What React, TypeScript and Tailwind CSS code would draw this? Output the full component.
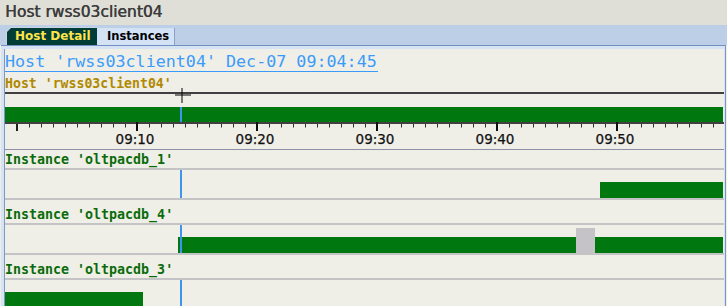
const SANS = "font-['DejaVu_Sans',sans-serif]";
const MONO = "font-['DejaVu_Sans_Mono',monospace]";

// timeline scale: 09:00 sits at page x 17, 12px per minute; content starts at page x 5
const toX = (sec: number) => 17 + (sec / 60) * 12 - 5;
const CURSOR = 820; // 09:13:40

type Span = { from: number; to: number; kind?: "busy" | "gap" };

const instances: { name: string; spans: Span[] }[] = [
  { name: "oltpacdb_1", spans: [{ from: 2915, to: 3530 }] },
  {
    name: "oltpacdb_4",
    spans: [
      { from: 805, to: 3530 },
      { from: 2795, to: 2890, kind: "gap" },
    ],
  },
  { name: "oltpacdb_3", spans: [{ from: -60, to: 630 }] },
];

function Bar({ span }: { span: Span }) {
  const left = toX(span.from);
  const width = toX(span.to) - left;
  if (span.kind === "gap") {
    return (
      <div
        className="absolute top-[3px] bottom-0 bg-[#c5c3c8]"
        style={{ left, width }}
      />
    );
  }
  return (
    <div
      className="absolute bottom-0 h-[16px] bg-[#00780f]"
      style={{ left, width }}
    />
  );
}

function CursorLine() {
  return (
    <div
      className="absolute top-0 bottom-0 w-[2px] bg-[#3d95f0]"
      style={{ left: toX(CURSOR) - 1 }}
    />
  );
}

function Ruler() {
  const minor = Array.from({ length: 59 }, (_, i) => 17 + i * 12);
  const labels = ["09:10", "09:20", "09:30", "09:40", "09:50"];
  return (
    <svg
      width={719}
      height={25}
      viewBox="5 0 719 25"
      className="block overflow-visible"
    >
      {minor.map((x) => (
        <rect key={x} x={x} y={0} width={1} height={3.5} fill="#303030" />
      ))}
      <rect x={16} y={0} width={2} height={7} fill="#202020" />
      {labels.map((t, i) => {
        const x = 137 + i * 120;
        return (
          <g key={t}>
            <rect x={x - 1} y={-3} width={2} height={10} fill="#101010" />
            <text
              x={x - 2}
              y={20}
              textAnchor="middle"
              fontFamily="DejaVu Sans, sans-serif"
              fontSize={13.5}
              fill="#111"
              stroke="#111"
              strokeWidth={0.25}
            >
              {t}
            </text>
          </g>
        );
      })}
    </svg>
  );
}

export default function App() {
  return (
    <div className="relative w-[727px] h-[306px] overflow-hidden bg-[#efefe7]">
      <div
        className={`h-[25px] bg-[#dfdfd7] pl-[5px] text-[15.5px] leading-[25px] text-[#3c3c3c] [text-shadow:0.5px_0_0_#3c3c3c] ${SANS}`}
      >
        Host rwss03client04
      </div>

      <div className={`h-[20px] bg-[#bccfe7] flex items-end pl-[6px] ${SANS}`}>
        <div className="h-[18px] w-[91px] bg-[#c9d5e5] pt-[1px] pl-[1px] [clip-path:polygon(5px_0,100%_0,100%_100%,0_100%,0_5px)]">
          <div className="h-full bg-[#003d36] pl-[8px] text-[12px] font-bold leading-[17px] text-[#ffe54a] [clip-path:polygon(4px_0,100%_0,100%_100%,0_100%,0_4px)]">
            Host Detail
          </div>
        </div>
        <div className="h-[17px] w-[78px] bg-[#d4e2f6] border-r border-[#8aa3cc] pl-[10px] text-[11.5px] font-bold leading-[17px] text-black">
          Instances
        </div>
      </div>

      <div className="border-t border-[#7391c0] bg-[#d6e3f5] pt-[3px] ml-[1px] mr-[1px] pl-[3px] pr-[1px] border-r border-r-[#7a93bf]">
        <div className="relative bg-[#efefe7] border-l border-[#7f97c4] h-[260px]">
          <div
            className={`inline-block h-[21px] border-b border-[#3b9bfb] pr-[1px] text-[16.7px] leading-[20px] text-[#3b9bfb] ${MONO}`}
          >
            Host 'rwss03client04' Dec-07 09:04:45
          </div>
          <div
            className={`h-[19px] pt-[3px] text-[13.2px] font-bold leading-[16px] text-[#b08900] ${MONO}`}
          >
            Host 'rwss03client04'
          </div>
          <div className="h-[2px] bg-[#404040]" />

          <div className="pt-[13px]">
            <div className="relative h-[15px]">
              <div className="absolute inset-y-0 left-0 w-[718px] bg-[#00780f]" />
              <CursorLine />
            </div>
            <div className="h-[2px] w-[719px] bg-[#404040]" />
            <Ruler />
          </div>
          <div className="h-px bg-[#8c90a8]" />

          {instances.map((inst, i) => (
            <div key={inst.name}>
              <div
                className={`${i === 0 ? "h-[18px]" : "h-[23px]"} flex items-end text-[13.3px] font-bold leading-[16px] text-[#0b6b0b] ${MONO}`}
              >
                Instance '{inst.name}'
              </div>
              <div className="h-[2px] bg-[#c4c4c6]" />
              <div className="relative h-[28px]">
                {inst.spans.map((s, j) => (
                  <Bar key={j} span={s} />
                ))}
                <CursorLine />
              </div>
              <div className="h-[2px] bg-[#c4c4c6]" />
            </div>
          ))}
        </div>
      </div>

      {/* mouse crosshair */}
      <svg
        className="absolute left-[174px] top-[87px]"
        width={18}
        height={17}
        viewBox="0 0 18 17"
      >
        <rect x={1} y={7.5} width={16} height={1} fill="#000" />
        <rect x={7.5} y={1} width={1} height={15} fill="#000" />
      </svg>
    </div>
  );
}
